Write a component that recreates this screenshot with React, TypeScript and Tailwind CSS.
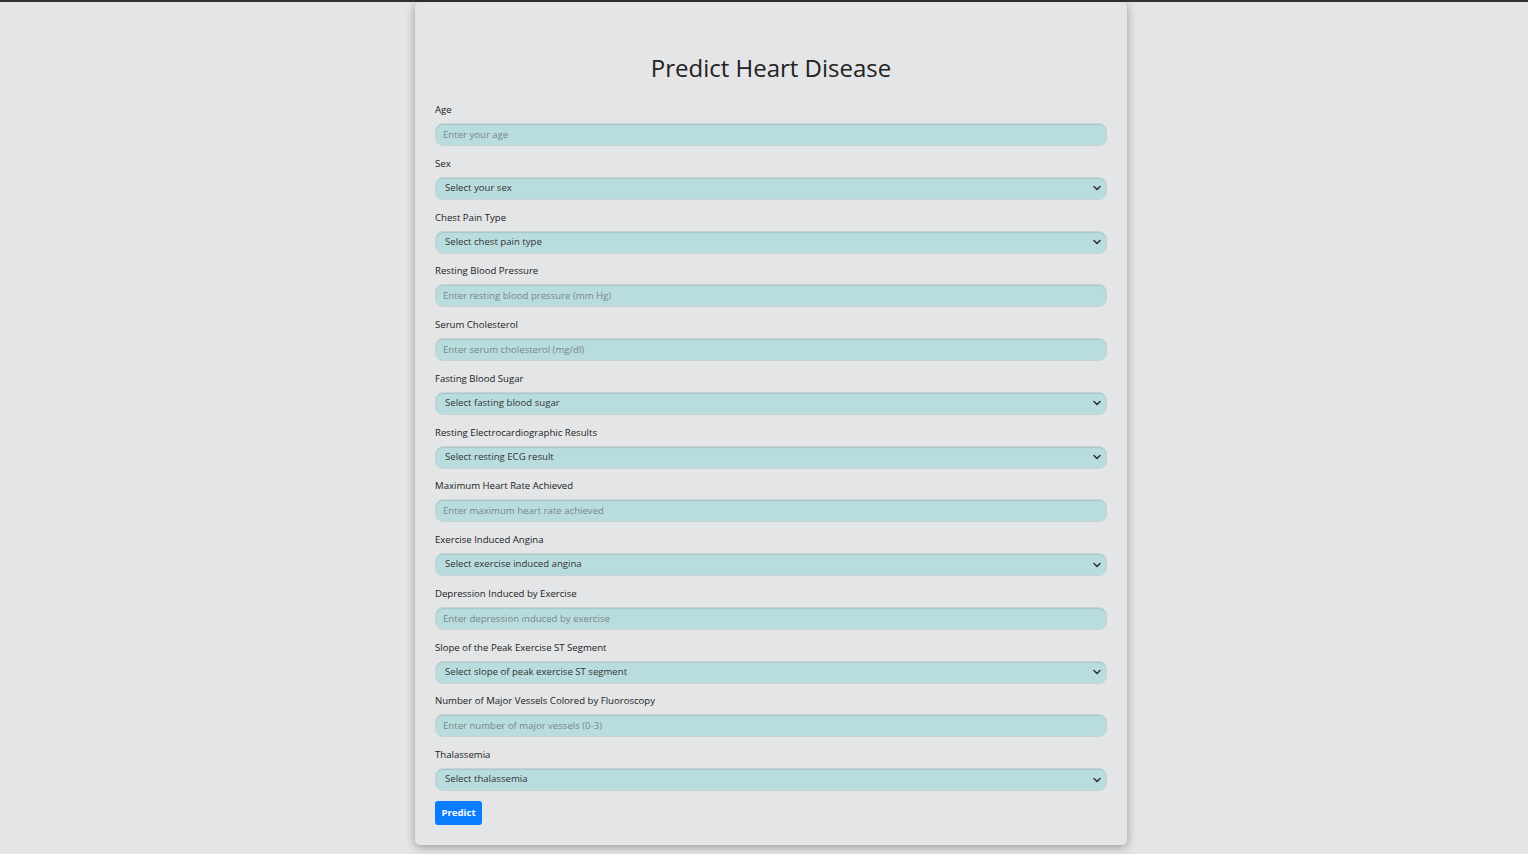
import { ChevronDown } from "lucide-react";

type Field = {
  label: string;
  placeholder: string;
  select?: boolean;
};

const fields: Field[] = [
  { label: "Age", placeholder: "Enter your age" },
  { label: "Sex", placeholder: "Select your sex", select: true },
  { label: "Chest Pain Type", placeholder: "Select chest pain type", select: true },
  { label: "Resting Blood Pressure", placeholder: "Enter resting blood pressure (mm Hg)" },
  { label: "Serum Cholesterol", placeholder: "Enter serum cholesterol (mg/dl)" },
  { label: "Fasting Blood Sugar", placeholder: "Select fasting blood sugar", select: true },
  { label: "Resting Electrocardiographic Results", placeholder: "Select resting ECG result", select: true },
  { label: "Maximum Heart Rate Achieved", placeholder: "Enter maximum heart rate achieved" },
  { label: "Exercise Induced Angina", placeholder: "Select exercise induced angina", select: true },
  { label: "Depression Induced by Exercise", placeholder: "Enter depression induced by exercise" },
  { label: "Slope of the Peak Exercise ST Segment", placeholder: "Select slope of peak exercise ST segment", select: true },
  { label: "Number of Major Vessels Colored by Fluoroscopy", placeholder: "Enter number of major vessels (0-3)" },
  { label: "Thalassemia", placeholder: "Select thalassemia", select: true },
];

function FormField({ field }: { field: Field }) {
  return (
    <div className="mb-[9.75px]">
      <label className="block text-[9.6px] leading-[15px] text-[#222] mb-[6px]">{field.label}</label>
      {field.select ? (
        <div className="relative">
          <div className="h-[23px] w-full rounded-[8px] border border-[#c9d3d4] bg-[#b9dddf] shadow-[inset_0_1px_1px_rgba(0,0,0,0.1)] pl-[9px] flex items-center text-[9.6px] text-[#333]">
            {field.placeholder}
          </div>
          <ChevronDown
            className="absolute right-[4px] top-[5.5px] text-[#333]"
            size={12}
            strokeWidth={3.2}
          />
        </div>
      ) : (
        <input
          type="text"
          placeholder={field.placeholder}
          className="block h-[23px] w-full rounded-[8px] border border-[#c9d3d4] bg-[#b9dddf] shadow-[inset_0_1px_1px_rgba(0,0,0,0.1)] px-[7px] text-[9.6px] text-[#333] placeholder:text-[#7a8588] outline-none"
        />
      )}
    </div>
  );
}

export default function App() {
  return (
    <div
      className="min-h-screen bg-[#e4e5e7] border-t-2 border-[#333] flex justify-center pl-[14px]"
      style={{ fontFamily: '"Open Sans", "Noto Sans", sans-serif' }}
    >
      <div className="w-[712px] h-fit bg-[#e4e5e7] rounded-[5px] shadow-[0_2px_10px_rgba(0,0,0,0.35)] px-[20px] pt-[50px] pb-[20px]">
        <h2 className="text-[24px] leading-[31px] font-medium text-center text-[#222] mb-[19px]">Predict Heart Disease</h2>
        <form>
          {fields.map((f) => (
            <FormField key={f.label} field={f} />
          ))}
          <button
            type="submit"
            className="block h-[24px] w-[47px] rounded-[3px] bg-[#0a7cff] text-white text-[9.6px] font-bold"
          >
            Predict
          </button>
        </form>
      </div>
    </div>
  );
}
